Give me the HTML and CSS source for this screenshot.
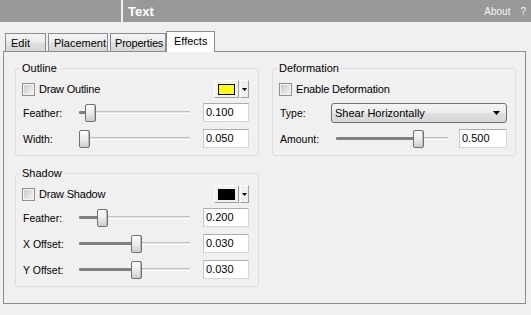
FILE: index.html
```html
<!DOCTYPE html>
<html>
<head>
<meta charset="utf-8">
<link rel="stylesheet" href="styles.css">
</head>
<body>
<header class="topbar">
  <div class="topbar-blank"></div>
  <div class="topbar-title">Text</div>
  <div class="topbar-links"><span>About</span><span>?</span></div>
</header>
<nav class="tabs">
  <div class="tab tab-edit">Edit</div>
  <div class="tab tab-placement">Placement</div>
  <div class="tab tab-properties">Properties</div>
  <div class="tab tab-active">Effects</div>
</nav>
<section class="panel">
  <div class="col">
    <fieldset class="group">
      <legend>Outline</legend>
      <div class="row row-check">
        <label class="check"><span class="box"></span>Draw Outline</label>
        <div class="color">
          <span class="color-btn"><span class="swatch swatch-yellow"></span></span>
          <span class="color-drop"><svg width="5" height="3" viewBox="0 0 5 3"><path d="M0 0h5L2.5 3z" fill="#000"/></svg></span>
        </div>
      </div>
      <div class="row">
        <span class="lbl">Feather:</span>
        <div class="slider"><span class="fill" style="width:6px"></span><span class="thumb"></span><span class="rest"></span></div>
        <span class="num">0.100</span>
      </div>
      <div class="row">
        <span class="lbl">Width:</span>
        <div class="slider"><span class="fill" style="width:0px"></span><span class="thumb"></span><span class="rest"></span></div>
        <span class="num">0.050</span>
      </div>
    </fieldset>
    <fieldset class="group">
      <legend>Shadow</legend>
      <div class="row row-check">
        <label class="check"><span class="box"></span>Draw Shadow</label>
        <div class="color">
          <span class="color-btn"><span class="swatch swatch-black"></span></span>
          <span class="color-drop"><svg width="5" height="3" viewBox="0 0 5 3"><path d="M0 0h5L2.5 3z" fill="#000"/></svg></span>
        </div>
      </div>
      <div class="row">
        <span class="lbl">Feather:</span>
        <div class="slider"><span class="fill" style="width:18px"></span><span class="thumb"></span><span class="rest"></span></div>
        <span class="num">0.200</span>
      </div>
      <div class="row">
        <span class="lbl">X Offset:</span>
        <div class="slider"><span class="fill" style="width:52px"></span><span class="thumb"></span><span class="rest"></span></div>
        <span class="num">0.030</span>
      </div>
      <div class="row">
        <span class="lbl">Y Offset:</span>
        <div class="slider"><span class="fill" style="width:52px"></span><span class="thumb"></span><span class="rest"></span></div>
        <span class="num">0.030</span>
      </div>
    </fieldset>
  </div>
  <div class="col">
    <fieldset class="group group-def">
      <legend>Deformation</legend>
      <div class="row row-check">
        <label class="check"><span class="box"></span>Enable Deformation</label>
      </div>
      <div class="row row-tall">
        <span class="lbl lbl-type">Type:</span>
        <div class="select"><span class="select-text">Shear Horizontally</span><svg class="select-arrow" width="7" height="4" viewBox="0 0 7 4"><path d="M0 0h7L3.5 4z" fill="#000"/></svg></div>
      </div>
      <div class="row">
        <span class="lbl">Amount:</span>
        <div class="slider slider-wide"><span class="fill" style="width:77px"></span><span class="thumb"></span><span class="rest"></span></div>
        <span class="num num-wide">0.500</span>
      </div>
    </fieldset>
  </div>
</section>
</body>
</html>
```

FILE: styles.css
```css
html, body {
  margin: 0;
  padding: 0;
}
body {
  background: #f0f0f0;
  font-family: "Liberation Sans", Arial, sans-serif;
  font-size: 10.5px;
  color: #000;
  width: 531px;
  height: 315px;
  overflow: hidden;
}

/* top bar */
.topbar {
  display: flex;
  align-items: center;
  height: 22px;
  background: #999999;
  color: #fff;
}
.topbar-blank {
  width: 121px;
  align-self: stretch;
  border-right: 2px solid #f0f0f0;
}
.topbar-title {
  flex: 1;
  padding-left: 5px;
  font-weight: bold;
  font-size: 13px;
}
.topbar-links {
  display: flex;
  gap: 10px;
  padding-right: 5px;
  font-size: 10px;
  color: #f6f6f6;
}

/* tabs */
.tabs {
  position: relative;
  z-index: 1;
  display: flex;
  align-items: flex-end;
  height: 21px;
  margin-top: 9px;
  margin-bottom: -1px;
  padding-left: 5px;
}
.tab {
  box-sizing: border-box;
  height: 18px;
  margin-bottom: 1px;
  padding: 2px 0 0 5px;
  line-height: 14px;
  font-size: 11px;
  border: 1px solid #898c95;
  border-bottom: none;
  background: linear-gradient(#f4f4f4, #ececec 45%, #e0e0e0 55%, #d6d6d6);
  white-space: nowrap;
  overflow: hidden;
}
.tab-edit { width: 41px; margin-right: 2px; }
.tab-placement { width: 60px; margin-right: 2px; }
.tab-properties { width: 56px; padding-left: 4px; letter-spacing: -0.2px; }
.tab-active {
  width: 49px;
  height: 21px;
  margin-bottom: 0;
  padding-left: 7px;
  background: #fff;
}

/* panel */
.panel {
  box-sizing: border-box;
  width: 523px;
  height: 253px;
  margin-left: 3px;
  border: 1px solid #898c95;
  padding: 10px 0 0 11px;
  display: grid;
  grid-template-columns: 244px 244px;
  column-gap: 13px;
  align-items: start;
}
.col {
  display: flex;
  flex-direction: column;
  gap: 11px;
}

/* group boxes */
.group {
  margin: 0;
  min-width: 0;
  border: 1px solid #d5dfe5;
  border-radius: 3px;
  padding: 5px 9px 7px 7px;
}
.group legend {
  margin-left: -3px;
  padding: 0 2px;
  line-height: 13px;
  font-size: 11px;
}
.group-def {
  padding-right: 8px;
}

/* rows */
.row {
  display: flex;
  align-items: center;
  height: 19px;
}
.row + .row { margin-top: 7px; }
.row-check { height: 18px; }
.row-check + .row { margin-top: 5px; }
.row-tall { height: 20px; }
.row-tall + .row { margin-top: 6px; }

.check {
  display: flex;
  align-items: center;
  gap: 4px;
  margin-left: -1px;
  font-size: 11px;
  letter-spacing: -0.2px;
}
.box {
  box-sizing: border-box;
  width: 13px;
  height: 13px;
  border: 1px solid #8e8f8f;
  box-shadow: inset 0 0 0 1px #f4f4f4;
  background: linear-gradient(135deg, #c4c6c8, #eeeeee 80%);
}

/* color picker */
.color {
  margin-left: auto;
  display: flex;
  gap: 1px;
}
.color-btn, .color-drop {
  box-sizing: border-box;
  height: 18px;
  display: flex;
  align-items: center;
  justify-content: center;
  background: #f0f0f0;
  border: 1px solid;
  border-color: #ffffff #a0a0a0 #a0a0a0 #ffffff;
}
.color-btn { width: 25px; }
.color-drop { width: 9px; }
.swatch {
  box-sizing: border-box;
  width: 17px;
  height: 11px;
  border: 1px solid #000;
}
.swatch-yellow { background: #ffff00; }
.swatch-black { background: #000; }

/* labels, sliders, inputs */
.lbl {
  flex: none;
  width: 56px;
}
.lbl-type { width: 51px; }

.slider {
  flex: none;
  width: 111px;
  height: 19px;
  display: flex;
  align-items: center;
}
.slider-wide { width: 112px; }
.fill {
  flex: none;
  height: 3px;
  background: #808080;
  border-radius: 1px 0 0 1px;
}
.thumb {
  flex: none;
  box-sizing: border-box;
  width: 11px;
  height: 18px;
  border: 1px solid #707070;
  border-radius: 2px;
  background: linear-gradient(#fdfdfd, #e9e9e9 55%, #cdcdcd);
  box-shadow: inset -1px 0 #b8b8b8;
}
.rest {
  flex: 1;
  height: 1px;
  background: #e2e2e2;
  border-top: 1px solid #c2c2c2;
  border-bottom: 1px solid #ffffff;
}

.num {
  flex: none;
  box-sizing: border-box;
  width: 46px;
  height: 19px;
  margin-left: 13px;
  padding-left: 2px;
  line-height: 17px;
  font-size: 11px;
  background: #fff;
  border: 1px solid #d4d8dd;
  border-top-color: #abadb3;
  border-left-color: #c4c7cc;
}
.num-wide {
  width: 48px;
  margin-left: 11px;
}

/* combo box */
.select {
  box-sizing: border-box;
  width: 176px;
  height: 20px;
  display: flex;
  align-items: center;
  padding: 0 6px 0 3px;
  border: 1px solid #707070;
  border-radius: 3px;
  background: linear-gradient(#f4f4f4, #ececec 50%, #e0e0e0 50%, #d6d6d6);
  font-size: 11px;
}
.select-text { flex: 1; }
.select-arrow { flex: none; }
```
